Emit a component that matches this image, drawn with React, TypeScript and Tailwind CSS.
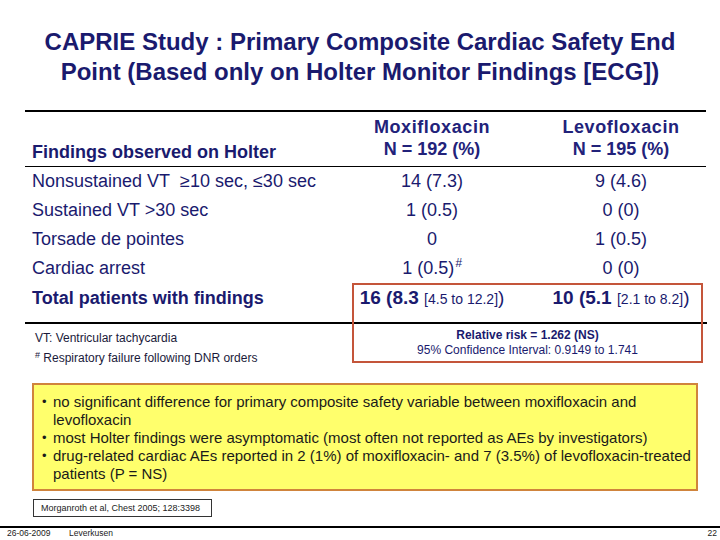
import React from "react";

const navy = "text-[#1a1a6e]";

function Row({ label, a, b }: { label: React.ReactNode; a: React.ReactNode; b: React.ReactNode }) {
  return (
    <div className={`grid grid-cols-[317px_180px_198px] h-[29px] items-center text-[18px] leading-[29px] ${navy}`}>
      <div className="pl-[7px] whitespace-nowrap">{label}</div>
      <div className="text-center whitespace-nowrap">{a}</div>
      <div className="text-center whitespace-nowrap">{b}</div>
    </div>
  );
}

export default function App() {
  return (
    <div
      className="relative w-[720px] h-[540px] bg-white overflow-hidden flex flex-col"
      style={{ fontFamily: '"Liberation Sans", Arial, sans-serif' }}
    >
      {/* Title */}
      <div className={`mt-[27px] text-center font-bold text-[24px] leading-[30px] ${navy}`}>
        <div>CAPRIE Study : Primary Composite Cardiac Safety End</div>
        <div>Point (Based only on Holter Monitor Findings [ECG])</div>
      </div>

      {/* Table */}
      <div className="ml-[25px] mt-[23px] w-[681px] h-[2px] bg-black" />
      <div className="ml-[25px] grid grid-cols-[317px_180px_198px] h-[54px]">
        <div className={`pl-[7px] flex items-end pb-[3px] font-bold text-[18px] leading-[22px] ${navy}`}>
          Findings observed on Holter
        </div>
        <div className="pt-[4px] text-center font-bold text-[18px] leading-[22px] text-[#22227a]">
          <div className="tracking-[0.6px]">Moxifloxacin</div>
          <div>N = 192 (%)</div>
        </div>
        <div className="pt-[4px] text-center font-bold text-[18px] leading-[22px] text-[#22227a]">
          <div className="tracking-[0.6px]">Levofloxacin</div>
          <div>N = 195 (%)</div>
        </div>
      </div>
      <div className="ml-[25px] w-[681px] h-[1px] bg-black" />
      <div className="ml-[25px]">
        <Row label={<>Nonsustained VT&nbsp; ≥10 sec, ≤30 sec</>} a="14 (7.3)" b="9 (4.6)" />
        <Row label="Sustained VT >30 sec" a="1 (0.5)" b="0 (0)" />
        <Row label="Torsade de pointes" a="0" b="1 (0.5)" />
        <Row
          label="Cardiac arrest"
          a={
            <>
              1 (0.5)<span className="inline-block text-[12px] leading-[12px] italic relative top-[-7px] ml-[1px]">#</span>
            </>
          }
          b="0 (0)"
        />
        <div className={`grid grid-cols-[317px_180px_198px] h-[39px] leading-[30px] ${navy}`}>
          <div className="pl-[7px] font-bold text-[18px] whitespace-nowrap">Total patients with findings</div>
          <div className="text-center whitespace-nowrap">
            <span className="font-bold text-[19px]">16 (8.3 </span>
            <span className="text-[14px]">[4.5 to 12.2]</span>
            <span className="text-[19px]">)</span>
          </div>
          <div className="text-center whitespace-nowrap">
            <span className="font-bold text-[19px]">10 (5.1 </span>
            <span className="text-[14px]">[2.1 to 8.2]</span>
            <span className="text-[19px]">)</span>
          </div>
        </div>
      </div>
      <div className="ml-[25px] w-[682px] h-[2px] bg-black" />

      {/* Footnotes + relative risk */}
      <div className="flex pt-[4px]">
        <div className="pl-[35px] w-[352px] text-[12px] leading-[20px] text-[#1a1a3a]">
          <div>VT: Ventricular tachycardia</div>
          <div>
            <span className="inline-block text-[9px] leading-[9px] relative top-[-4px]">#</span> Respiratory failure following DNR orders
          </div>
        </div>
        <div className={`w-[351px] text-center text-[12px] leading-[15px] ${navy}`}>
          <div className="font-bold">Relative risk = 1.262 (NS)</div>
          <div>95% Confidence Interval: 0.9149 to 1.741</div>
        </div>
      </div>

      {/* Red highlight box */}
      <div className="absolute left-[352px] top-[283px] w-[351px] h-[80px] border-2 border-[#c4553a] pointer-events-none" />

      {/* Yellow summary box */}
      <div className="ml-[32px] mt-[15px] w-[666px] h-[108px] border-2 border-[#d0843c] bg-[#ffff6c] pt-[8px] pl-[8px] text-[15px] leading-[18px] text-[#1a1a1a]">
        <div className="flex">
          <div className="w-[11px] text-[13px]">•</div>
          <div>
            <div className="whitespace-nowrap">no significant difference for primary composite safety variable between moxifloxacin and</div>
            <div className="whitespace-nowrap">levofloxacin</div>
          </div>
        </div>
        <div className="flex">
          <div className="w-[11px] text-[13px]">•</div>
          <div className="whitespace-nowrap">
            most Holter findings were asymptomatic (most often not reported as AEs by investigators)
          </div>
        </div>
        <div className="flex">
          <div className="w-[11px] text-[13px]">•</div>
          <div>
            <div className="whitespace-nowrap">
              drug-related cardiac AEs reported in 2 (1%) of moxifloxacin- and 7 (3.5%) of levofloxacin-treated
            </div>
            <div className="whitespace-nowrap">patients (P = NS)</div>
          </div>
        </div>
      </div>

      {/* Citation */}
      <div className="ml-[33px] mt-[8px] w-[179px] h-[18px] border border-[#333] bg-white pl-[7px] text-[9px] leading-[16px] text-[#222] whitespace-nowrap">
        Morganroth et al, Chest 2005; 128:3398
      </div>

      {/* Footer */}
      <div className="mt-[9px] w-[720px] h-[2px] bg-black" />
      <div className="flex items-center h-[10px] text-[8.5px] leading-[10px] text-[#222]">
        <div className="pl-[7px] w-[69px]">26-06-2009</div>
        <div className="flex-1">Leverkusen</div>
        <div className="pr-[3px]">22</div>
      </div>
    </div>
  );
}
